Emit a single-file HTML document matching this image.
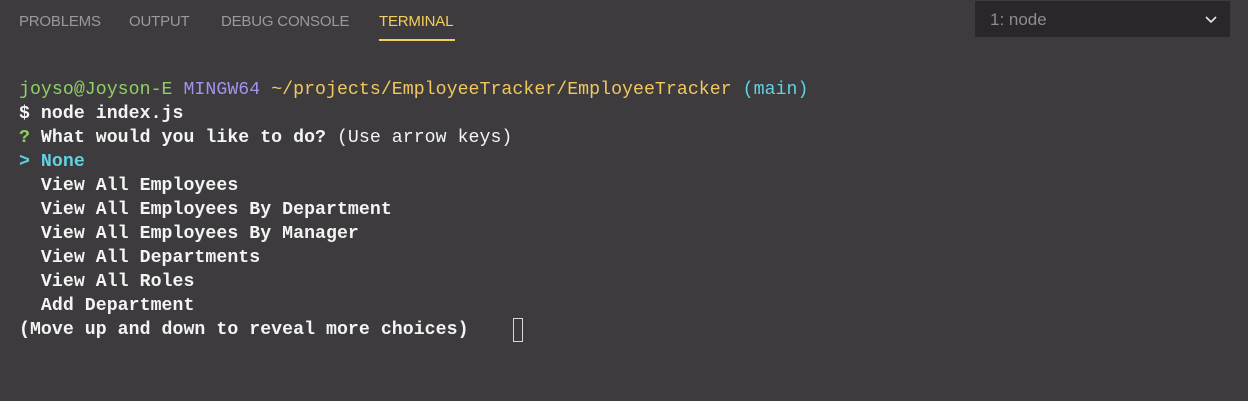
<!DOCTYPE html>
<html><head><style>
html,body{margin:0;padding:0;width:1248px;height:401px;background:#3d3b3e;overflow:hidden}
.tab{position:absolute;top:13px;font:15px "Liberation Sans",sans-serif;color:#9a999b;letter-spacing:-0.2px}
.sel{color:#f2cf5c}
.ul{position:absolute;left:379px;top:39px;width:76px;height:2px;background:#f2cf5c}
.dd{position:absolute;left:975px;top:1px;width:255px;height:36px;background:#29272a}
.dd span{position:absolute;left:15px;top:9px;font:17px "Liberation Sans",sans-serif;color:#8d8c8f}
pre{position:absolute;left:19px;top:78px;margin:0;font:bold 18.2px/24px "Liberation Mono",monospace;color:#f4f4f4;letter-spacing:0.05px}
.g{color:#8fd165}.p{color:#a592ee}.y{color:#f1c85c}.c{color:#62d1e0}.n{font-weight:normal}
.cur{position:absolute;left:513px;top:318px;width:10px;height:24px;border:1px solid #d8d8d8;box-sizing:border-box}
</style></head><body>
<div class="tab" style="left:19px">PROBLEMS</div>
<div class="tab" style="left:129px">OUTPUT</div>
<div class="tab" style="left:221px">DEBUG CONSOLE</div>
<div class="tab sel" style="left:379px">TERMINAL</div>
<div class="ul"></div>
<div class="dd"><span>1: node</span>
<svg style="position:absolute;left:230px;top:14px" width="12" height="10"><path d="M1 2 L6 7 L11 2" stroke="#e8e8e8" stroke-width="1.6" fill="none"/></svg></div>
<pre><span class="n"><span class="g">joyso@Joyson-E</span> <span class="p">MINGW64</span> <span class="y">~/projects/EmployeeTracker/EmployeeTracker</span> <span class="c">(main)</span></span>
$ node index.js
<span class="g">?</span> What would you like to do? <span class="n">(Use arrow keys)</span>
<span class="c">&gt; None</span>
  View All Employees
  View All Employees By Department
  View All Employees By Manager
  View All Departments
  View All Roles
  Add Department
(Move up and down to reveal more choices)</pre>
<div class="cur"></div>
</body></html>
